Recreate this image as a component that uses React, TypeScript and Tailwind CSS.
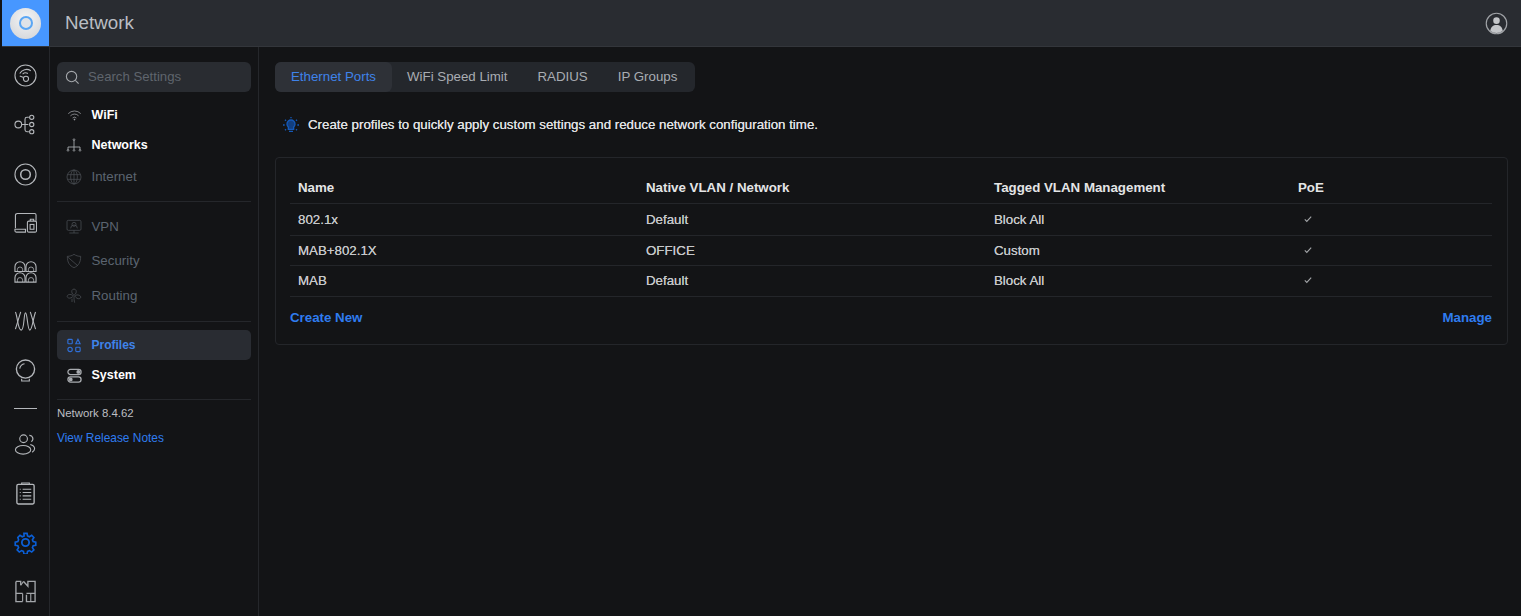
import React from "react";

const I = ({ children, className = "" }: { children: React.ReactNode; className?: string }) => (
  <svg viewBox="0 0 24 24" fill="none" stroke="currentColor" strokeWidth={1.15} className={className}>
    {children}
  </svg>
);

const railIcons: React.ReactNode[] = [
  <>
    <circle cx="12" cy="12" r="11" />
    <path d="M6 10a8 8 0 0 1 11.500-3" />
    <path d="M9 10.500a4.500 4.500 0 0 1 5.500-.5" />
    <circle cx="12.500" cy="15.500" r="2.700" />
    <path d="M6 12.500l4 1.500" />
  </>,
  <>
    <circle cx="4.500" cy="12" r="3.500" />
    <path d="M8 12h7M11.500 12V6.500a2 2 0 0 1 2-2h2M11.500 12v5.500a2 2 0 0 0 2 2h2" />
    <circle cx="18.500" cy="4.500" r="2.200" />
    <circle cx="18.500" cy="12" r="2.200" />
    <circle cx="18.500" cy="19.500" r="2.200" />
  </>,
  <>
    <circle cx="12" cy="12" r="11" />
    <circle cx="12" cy="12" r="5" strokeWidth={1.6} />
  </>,
  <>
    <path d="M1.500 17V3.500a2 2 0 0 1 2-2h18a1.500 1.500 0 0 1 1.500 1.500V9" />
    <path d="M1 18h11v3H2.500A1.500 1.500 0 0 1 1 19.500Z" />
    <rect x="14" y="9.500" width="9.500" height="11.500" rx="1.500" />
    <path d="M17 9.500V7.500h3.500v2" />
    <rect x="16.800" y="13" width="4" height="5" />
  </>,
  <>
    <path d="M1 11V6a5 5 0 0 1 10.500 0v5Z" />
    <path d="M12.500 11V6a5 5 0 0 1 10.500 0v5Z" />
    <path d="M1 22v-4.500a5 5 0 0 1 10.500 0V22Z" />
    <path d="M12.500 22v-4.500a5 5 0 0 1 10.500 0V22Z" />
    <path d="M3.500 11V9a2.700 2.700 0 0 1 5.500 0v2M15 11V9a2.700 2.700 0 0 1 5.500 0v2M3.500 22v-2a2.700 2.700 0 0 1 5.500 0v2M15 22v-2a2.700 2.700 0 0 1 5.500 0v2" strokeWidth={0.8} />
  </>,
  <>
    <path d="M1.500 2C4 8 4 21 7.500 21S10 3 12 3s2 18 4.500 18S20 8 22.500 2" />
    <path d="M7 2 1.500 20M17 2l5.500 18" />
  </>,
  <>
    <circle cx="12" cy="10.500" r="9.500" strokeWidth={1.4} />
    <path d="M6 10a6 6 0 0 1 5-5" />
    <path d="M8 20.500v2.500h8v-2.500" />
  </>,
];

const railIconsBottom: { c: string; n: React.ReactNode }[] = [
  {
    c: "text-[#b4b7bb]",
    n: (
      <>
        <circle cx="10" cy="6" r="4" />
        <path d="M16 2.500a3.500 3.500 0 0 1 2 6.500" />
        <ellipse cx="9.500" cy="17.500" rx="8" ry="4.500" />
        <path d="M17 12c3 .8 4.500 2.500 4.500 4.500 0 1.500-1 2.500-2.500 3.500" />
      </>
    ),
  },
  {
    c: "text-[#b4b7bb]",
    n: (
      <>
        <rect x="3" y="2.500" width="18" height="20.500" rx="1.500" strokeWidth={1.4} />
        <path d="M8 2.500V1h8v1.500" />
        <path d="M6 7.500h1M9 7.500h9M6 11h1M9 11h9M6 14.500h1M9 14.500h9M6 18h1M9 18h9" />
      </>
    ),
  },
  {
    c: "text-[#0b5fd6]",
    n: (
      <g strokeWidth={1.9}>
        <path d="M10.200 1.500h3.600l.6 3 2.200.9 2.600-1.700 2.500 2.500-1.700 2.600.9 2.200 3 .6v3.600l-3 .6-.9 2.200 1.700 2.600-2.500 2.500-2.600-1.700-2.200.9-.6 3h-3.600l-.6-3-2.200-.9-2.600 1.700-2.500-2.500 1.700-2.600-.9-2.200-3-.6v-3.600l3-.6.9-2.200L3.100 6.200l2.500-2.500 2.600 1.700 2.200-.9Z" transform="translate(1.200 1.200) scale(.9)" />
        <circle cx="12" cy="12" r="3.800" />
      </g>
    ),
  },
  {
    c: "text-[#a3a6aa]",
    n: (
      <>
        <path d="M2 1.500h5v4M10 1.500l4.500 5V1.500H22v21h-9v-7M2 1.500v21h7" strokeWidth={1.4} />
        <path d="M2 14h7M9 14v8.500M13 14h9M17.500 14v8.500M7 5.500 10 1.500" />
      </>
    ),
  },
];

const NavItem = ({
  label,
  icon,
  tone,
  h,
}: {
  label: string;
  icon: React.ReactNode;
  tone: "on" | "dim" | "active";
  h: string;
}) => {
  const text =
    tone === "on"
      ? "text-white font-bold text-[12.5px]"
      : tone === "dim"
        ? "text-[#5b6470] text-[13.3px]"
        : "text-[#3f83ea] font-bold text-[12px] bg-[#292c32] rounded-[5px]";
  const ic = tone === "on" ? "text-[#a8abaf]" : tone === "dim" ? "text-[#4a4e54]" : "text-[#2f6fd8]";
  return (
    <div className={`flex items-center ${h} pl-[9px] ${text}`}>
      <span className={`w-[16px] h-[16px] mr-[9.500px] flex items-center justify-center ${ic}`}>{icon}</span>
      {label}
    </div>
  );
};

const Divider = () => <div className="h-px bg-[#25272b]" />;

const Check = () => (
  <svg viewBox="0 0 10 10" fill="none" stroke="#a3a5a8" strokeWidth={1.4} className="w-[8px] h-[8px] ml-[6px] -mt-[2px]">
    <path d="M1 5.500 3.500 8 9 2" />
  </svg>
);

const rows: [string, string, string, string][] = [
  ["802.1x", "Default", "Block All", "h-[32px]"],
  ["MAB+802.1X", "OFFICE", "Custom", "h-[30px]"],
  ["MAB", "Default", "Block All", "h-[31px]"],
];

const gridCols = "grid grid-cols-[348px_348px_304px_1fr] px-[8px]";

export default function App() {
  return (
    <div
      className="w-[1521px] h-[616px] overflow-hidden flex flex-col bg-[#131416] pl-[2px] text-[#c6c8ca]"
      style={{ fontFamily: '"Liberation Sans", Arial, sans-serif' }}
    >
      <header className="h-[47px] shrink-0 flex items-center bg-[#292c31] border-b border-[#33363b]">
        <div className="w-[47px] h-[46px] bg-[#4797ff] flex items-center justify-center">
          <div className="w-[31px] h-[31px] rounded-full bg-[radial-gradient(circle_at_50%_35%,#f4f4f5,#cfd2d6)] flex items-center justify-center">
            <div className="w-[14px] h-[14px] rounded-full border-[2px] border-[#5aa6f4] bg-[#dfe3e8]" />
          </div>
        </div>
        <div className="ml-[16px] text-[18.8px] text-[#b9bdc3]">Network</div>
        <svg viewBox="0 0 24 24" className="w-[23px] h-[23px] ml-auto mr-[13px]" fill="none">
          <circle cx="12" cy="12" r="10.700" stroke="#a0a3a7" strokeWidth="1.200" />
          <circle cx="12" cy="9" r="3.400" fill="#c4c6c9" />
          <path d="M5.500 19.500c.5-4 3-6 6.500-6s6 2 6.500 6a10 10 0 0 1-13 0Z" fill="#c4c6c9" />
        </svg>
      </header>

      <div className="flex flex-1 min-h-0">
        <nav className="w-[48px] shrink-0 border-r border-[#25272b] pt-[4px] flex flex-col text-[#b4b7bb]">
          {railIcons.map((n, i) => (
            <div key={i} className="h-[49.5px] flex items-center justify-center">
              <I className="w-[23px] h-[23px]">{n}</I>
            </div>
          ))}
          <div className="h-px w-[23px] mx-auto bg-[#b4b7bb] mt-[12px] mb-[11px]" />
          {railIconsBottom.map((it, i) => (
            <div key={i} className={`h-[49.400px] flex items-center justify-center ${it.c}`}>
              <I className="w-[23px] h-[23px]">{it.n}</I>
            </div>
          ))}
        </nav>

        <aside className="w-[209px] shrink-0 border-r border-[#25272b] px-[7px] pt-[15px]">
          <div className="h-[30px] bg-[#292c31] rounded-[6px] flex items-center pl-[8px] text-[13.2px] text-[#5f656d] mb-[8px]">
            <svg viewBox="0 0 16 16" fill="none" stroke="#a3a6aa" strokeWidth="1.200" className="w-[15px] h-[15px] mr-[8px]">
              <circle cx="7" cy="7" r="5.500" />
              <path d="m11 11 3.500 3.500" />
            </svg>
            Search Settings
          </div>
          <NavItem
            label="WiFi"
            tone="on"
            h="h-[30px]"
            icon={
              <I className="w-[15px] h-[15px]">
                <path d="M2 9a14 14 0 0 1 20 0M5.500 12.500a9 9 0 0 1 13 0M9 16a4.500 4.500 0 0 1 6 0" />
                <circle cx="12" cy="18.500" r=".8" fill="currentColor" />
              </I>
            }
          />
          <NavItem
            label="Networks"
            tone="on"
            h="h-[30px]"
            icon={
              <I className="w-[16px] h-[16px]">
                <path d="M12 5v13M3 19v-4h18v4" strokeWidth={1.300} />
                <circle cx="12" cy="4" r="1.300" />
                <circle cx="3" cy="20" r="1.300" />
                <circle cx="12" cy="20" r="1.300" />
                <circle cx="21" cy="20" r="1.300" />
              </I>
            }
          />
          <NavItem
            label="Internet"
            tone="dim"
            h="h-[34px] mb-[7px]"
            icon={
              <I className="w-[16px] h-[16px]">
                <circle cx="12" cy="12" r="10.500" />
                <ellipse cx="12" cy="12" rx="5" ry="10.500" />
                <path d="M2 8.500h20M2 15.500h20M12 1.500v21" />
              </I>
            }
          />
          <Divider />
          <NavItem
            label="VPN"
            tone="dim"
            h="h-[35px] mt-[7px]"
            icon={
              <I className="w-[16px] h-[16px]">
                <rect x="1.500" y="2" width="21" height="15" rx="2" />
                <circle cx="12" cy="8" r="3" />
                <path d="M7 14a5 5 0 0 1 10 0M12 17v4M5 21h14" />
              </I>
            }
          />
          <NavItem
            label="Security"
            tone="dim"
            h="h-[34px]"
            icon={
              <I className="w-[16px] h-[16px]">
                <path d="M2 5c4 0 7-1 10-3 3 2 6 3 10 3 0 9-3 14-10 17C5 19 2 14 2 5Z" />
                <path d="m2.500 6 15 13" />
              </I>
            }
          />
          <NavItem
            label="Routing"
            tone="dim"
            h="h-[35px] mb-[8px]"
            icon={
              <I className="w-[16px] h-[16px]">
                <path d="M12 11C9 9 8 6 9 3.500 10 1 14 1 15 3.500c1 2.500 0 5.500-3 7.500ZM11 12c-2-2-5-3-7-2-3 1-3 4 0 5 2 .8 5-.5 7-3ZM13 12c2-2 5-2 7-1 3 1.500 3 4 0 5-2 .7-5-1-7-4ZM12 13c0 2 0 6 1 9M9 16v5" />
              </I>
            }
          />
          <Divider />
          <div className="mt-[8px]">
            <NavItem
              label="Profiles"
              tone="active"
              h="h-[30px]"
              icon={
                <svg viewBox="0 0 16 16" fill="none" stroke="currentColor" strokeWidth="1.300" className="w-[14px] h-[15px]">
                  <rect x="1" y="1" width="5" height="5" rx="1" />
                  <path d="M12.500 1 15 6h-5Z" />
                  <circle cx="3.500" cy="12.500" r="2.500" />
                  <rect x="10" y="10" width="5" height="5" rx="1" />
                </svg>
              }
            />
          </div>
          <NavItem
            label="System"
            tone="on"
            h="h-[30px] mb-[9px]"
            icon={
              <svg viewBox="0 0 16 16" fill="none" stroke="currentColor" strokeWidth="1.400" className="w-[15px] h-[15px]">
                <rect x="1" y="1.500" width="14" height="5.500" rx="2.700" />
                <rect x="1" y="9.500" width="14" height="5.500" rx="2.700" />
                <circle cx="12" cy="4.200" r="1.300" fill="currentColor" />
                <circle cx="4" cy="12.200" r="1.300" fill="currentColor" />
              </svg>
            }
          />
          <Divider />
          <div className="text-[11.4px] leading-[14px] text-[#bdbfc2] mt-[6px]">Network 8.4.62</div>
          <div className="text-[11.9px] leading-[14px] text-[#2f7cf0] mt-[11px]">View Release Notes</div>
        </aside>

        <main className="flex-1 min-w-0 pt-[15px] pl-[16px] pr-[13px]">
          <div className="w-[420px] h-[30px] bg-[#24272c] rounded-[6px] flex items-center text-[13.3px] text-[#a9adb3]">
            <div className="w-[117px] h-full bg-[#2e3137] rounded-[6px] flex items-center justify-center text-[#3f83ea]">
              Ethernet Ports
            </div>
            <span className="ml-[15px]">WiFi Speed Limit</span>
            <span className="ml-[30px]">RADIUS</span>
            <span className="ml-[30px]">IP Groups</span>
          </div>

          <div className="h-[65px] flex items-center pl-[8px] text-[13.3px] text-[#e0e1e3] [text-shadow:0_0_0.6px_currentColor]">
            <svg viewBox="0 0 24 24" fill="none" stroke="#1559b8" strokeWidth="2" className="w-[16px] h-[16px] mr-[9px]">
              <path d="M8 15a6 6 0 1 1 8 0v3.500H8Z" fill="#123f80" />
              <path d="M9 21.500h6M12 0v2M3 4l1.500 1.500M21 4l-1.500 1.500M0 12h2.500M24 12h-2.500M3 20l1.500-1.500M21 20l-1.500-1.500" />
            </svg>
            Create profiles to quickly apply custom settings and reduce network configuration time.
          </div>

          <section className="h-[188px] border border-[#24262a] rounded-[4px] pl-[14px] pr-[15px] pt-[14px]">
            <div className={`${gridCols} h-[32px] items-center border-b border-[#24262a] text-[13.3px] font-bold text-[#e4e5e6]`}>
              <span>Name</span>
              <span>Native VLAN / Network</span>
              <span>Tagged VLAN Management</span>
              <span>PoE</span>
            </div>
            {rows.map((r) => (
              <div
                key={r[0]}
                className={`${gridCols} ${r[3]} items-center border-b border-[#24262a] text-[13.3px] text-[#c6c8ca] [text-shadow:0_0_0.6px_currentColor]`}
              >
                <span>{r[0]}</span>
                <span>{r[1]}</span>
                <span>{r[2]}</span>
                <Check />
              </div>
            ))}
            <div className="flex justify-between items-center h-[42px] text-[13.3px] font-bold text-[#2f7cf0]">
              <span>Create New</span>
              <span>Manage</span>
            </div>
          </section>
        </main>
      </div>
    </div>
  );
}
